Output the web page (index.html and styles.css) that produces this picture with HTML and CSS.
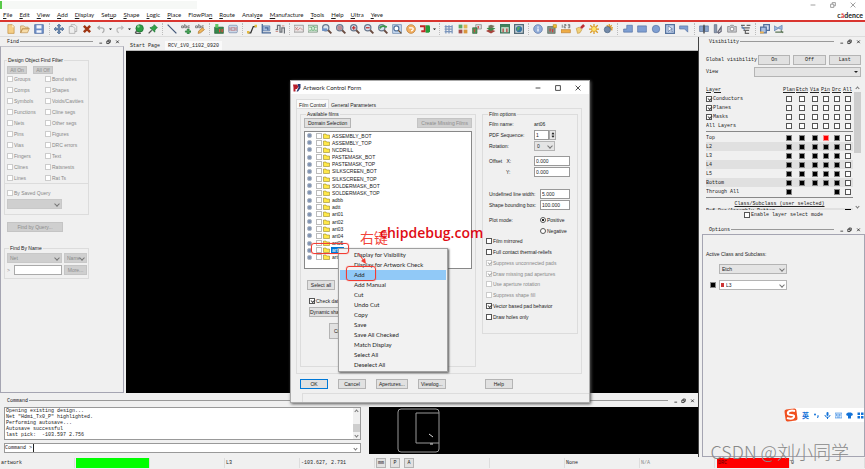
FILE: index.html
```
<!DOCTYPE html>
<html lang="en">
<head>
  <meta charset="UTF-8">
  <meta name="viewport" content="width=device-width, initial-scale=1.0">
  <title>Artwork Control Form</title>
  <link rel="stylesheet" href="styles.css">
</head>
<body>
  <header class="titlebar">
    <div class="doc-title"></div>
    <div class="window-icons">
      <svg viewBox="0 0 10 10"><path d="M2 5h6"/></svg>
      <svg viewBox="0 0 10 10"><path d="M2 4h4v4H2zM4 4V2h4v4H6"/></svg>
      <svg viewBox="0 0 10 10"><path d="M2 2l6 6M8 2L2 8"/></svg>
    </div>
  </header>
  <nav class="menubar">
    <a href="#"><u>F</u>ile</a><a href="#"><u>E</u>dit</a><a href="#"><u>V</u>iew</a><a href="#"><u>A</u>dd</a><a href="#"><u>D</u>isplay</a><a href="#">Set<u>u</u>p</a><a href="#"><u>S</u>hape</a><a href="#"><u>L</u>ogic</a><a href="#"><u>P</u>lace</a><a href="#">FlowPla<u>n</u></a><a href="#"><u>R</u>oute</a><a href="#">Analy<u>z</u>e</a><a href="#"><u>M</u>anufacture</a><a href="#"><u>T</u>ools</a><a href="#"><u>H</u>elp</a><a href="#"><u>U</u>ltra</a><a href="#"><u>Y</u>eve</a>
    <span class="brand">c<i>ā</i>dence</span>
  </nav>

  <div class="toolbar">
    <div class="group">
      <svg viewBox="0 0 16 16"><path fill="#f5cf87" stroke="#bb8638" d="M3 1h7l3 3v11H3z"/><path fill="#fff3d5" d="M10 1v4h3z"/></svg>
      <svg viewBox="0 0 16 16"><path fill="#f7dca8" stroke="#b98a47" d="M1 3h5l2 2h5v3H4l-3 6zM1 14l3-7h11l-3 7z"/></svg>
      <svg viewBox="0 0 16 16"><path fill="#6d8fc9" stroke="#3f5e98" d="M1 1h14v14H1z"/><path fill="#f3f6fb" d="M4 2h8v5H4zM4 10h8v4H4z"/></svg>
    </div>
    <div class="group">
      <svg viewBox="0 0 16 16"><path fill="#6d8eb5" stroke="#3d5f8b" d="M8 0l3 3H9v4h4V5l3 3-3 3V9H9v4h2l-3 3-3-3h2V9H3v2L0 8l3-3v2h4V3H5z"/></svg>
      <svg viewBox="0 0 16 16"><path fill="#eee" stroke="#999" d="M5 1h6l3 3v8H5z"/><path fill="#eee" stroke="#999" d="M2 4h6l3 3v8H2z"/></svg>
      <svg viewBox="0 0 16 16"><path fill="none" stroke="#9f3512" stroke-width="4" d="M3 3l10 10M13 3L3 13"/></svg>
      <svg viewBox="0 0 16 16"><path fill="none" stroke="#aaa" stroke-width="2" d="M6 3L3 6l3 3M3 6h6c5 0 5 6 1 8"/></svg>
      <svg class="arrow" viewBox="0 0 6 16"><path d="M0 7h6l-3 3z"/></svg>
      <svg viewBox="0 0 16 16"><path fill="none" stroke="#bbb" stroke-width="2" d="M10 3l3 3-3 3M13 6H7c-5 0-5 6-1 8"/></svg>
      <svg class="arrow" viewBox="0 0 6 16"><path d="M0 7h6l-3 3z"/></svg>
      <svg viewBox="0 0 16 16"><circle cx="9" cy="7" r="6" fill="#2f9e45" stroke="#136326"/><circle cx="7" cy="4" r="2" fill="#8bda97"/><path stroke="#555" stroke-width="2" d="M3 15h8M4 11l-2 4"/></svg>
      <svg viewBox="0 0 16 16"><path fill="#33a44a" stroke="#176d2b" d="M10 1l5 5-2 1-2 3v3L3 6l3-1 3-2z"/><path stroke="#555" stroke-width="2" d="M6 10l-5 5"/></svg>
    </div>
    <div class="group">
      <svg viewBox="0 0 16 16"><path stroke="#405577" stroke-width="2" d="M1 1l14 14"/></svg>
      <svg viewBox="0 0 16 16"><path fill="none" stroke="#444" d="M1 6V3h3v3H1M6 0v6h3V3H6M14 3h-3v3h3"/><path fill="#48a555" stroke="#24763a" d="M10 8h3v3h3v2h-3v3h-3v-3H7v-2h3z"/></svg>
      <svg viewBox="0 0 16 16"><path fill="none" stroke="#444" d="M1 6V3h3v3H1M6 0v6h3V3H6M14 3h-3v3h3"/><path fill="#efb75d" stroke="#a96d25" d="M5 15l1-4 6-5 3 3-6 5z"/></svg>
    </div>
    <div class="group">
      <svg viewBox="0 0 16 16"><path fill="#37874a" stroke="#225b34" d="M1 5h14v10H1z"/><path fill="#62c765" d="M2 0h5v6H2z"/><path fill="#e3463d" d="M8 8h2v5H8zM12 8h2v5h-2z"/></svg>
      <svg viewBox="0 0 16 16"><rect x="1" y="2" width="14" height="12" rx="2" fill="#ccd8e8" stroke="#6d83a5"/><path fill="none" stroke="#b65a5a" d="M5 6h6v4H5zM3 5v6M13 5v6"/></svg>
    </div>
    <div class="group">
      <svg viewBox="0 0 16 16"><path fill="none" stroke="#333" stroke-width="2" d="M2 14h4l4-10h5"/><path fill="#e4ba3d" d="M0 11h4v4H0zM12 1h4v4h-4z"/></svg>
      <svg viewBox="0 0 16 16"><path fill="#a5bce0" stroke="#456695" d="M3 3h11v8H3z"/><path fill="none" stroke="#456695" stroke-width="2" d="M2 0v14h14M6 6h5v4"/></svg>
      <svg viewBox="0 0 16 16"><path fill="none" stroke="#6b7077" stroke-width="2" d="M1 9h3V2h4v11h3V6h4v9"/><path stroke="#bb5b50" d="M1 12h4M11 3h4"/></svg>
    </div>
    <div class="group">
      <svg viewBox="0 0 16 16"><path fill="#e8e4e4" stroke="#777" d="M0 2h15v11H0z"/><path fill="none" stroke="#c36a69" d="M2 5l4 5 4-4 4 4M2 10l4-5"/></svg>
      <svg viewBox="0 0 16 16"><path fill="#e3efe4" stroke="#55735b" d="M0 2h15v11H0z"/><path fill="none" stroke="#349347" d="M2 5h4v5h4V5h4M2 10h3M7 4h3M11 10h3"/></svg>
      <svg viewBox="0 0 16 16"><use href="#lens"/><path fill="#6f94c8" d="M0 7h8v4H0z"/></svg>
      <svg viewBox="0 0 16 16"><use href="#lens"/><circle cx="6" cy="6" r="4" fill="#b98b93"/></svg>
      <svg viewBox="0 0 16 16"><use href="#lens"/><path stroke="#c02d2d" stroke-width="2" d="M3 6h6M6 3v6"/></svg>
      <svg viewBox="0 0 16 16"><use href="#lens"/><path stroke="#c02d2d" stroke-width="2" d="M3 6h6"/></svg>
      <svg viewBox="0 0 16 16"><use href="#lens"/><path fill="none" stroke="#3a9948" stroke-width="3" d="M3 7c2-5 7-4 11-2"/></svg>
      <svg viewBox="0 0 16 16"><path fill="#cbdcf2" stroke="#54749e" d="M1 1h14v14H1z"/><circle cx="7" cy="7" r="4" fill="#fff" stroke="#54749e" stroke-width="2"/><path stroke="#705030" stroke-width="2" d="M10 10l5 5"/></svg>
      <svg viewBox="0 0 16 16"><circle cx="8" cy="8" r="7" fill="#f1af61" stroke="#b97227"/><path fill="none" stroke="#fff" stroke-width="2" d="M5 6h5c3 1 1 5-2 5"/></svg>
      <svg viewBox="0 0 16 16"><path fill="#c32626" d="M0 2h9v11H2v-3h4V5H0z"/><path fill="#269a39" d="M9 2h6l1 2v8l-2 2H9z"/></svg>
      <svg class="arrow" viewBox="0 0 6 16"><path d="M0 7h6l-3 3z"/></svg>
    </div>
    <div class="group">
      <svg viewBox="0 0 16 16"><path fill="none" stroke="#7c96bc" stroke-width="2" d="M1 4h13M1 8h13M1 12h13M3 2v13M8 2v13M13 2v13"/></svg>
      <svg viewBox="0 0 16 16"><path fill="#5da864" d="M1 1h6v6H1z"/><path fill="#e1b755" d="M9 1h6v6H9z"/><path fill="#a74d48" d="M1 9h6v6H1z"/><path fill="#d9963d" d="M9 9h6v6H9z"/></svg>
      <svg viewBox="0 0 16 16"><path fill="#ddd" stroke="#777" d="M6 1h9v7H6z"/><path fill="#4f9a57" stroke="#335c3b" d="M1 6h7v9H1z"/><path stroke="#c44" stroke-width="2" d="M4 8v5M10 3v4"/></svg>
      <svg viewBox="0 0 16 16"><path fill="#a6443c" d="M0 11l6-3 9 3-7 4z"/><path fill="#3f874b" d="M1 7l6-3 8 3-7 4z"/><path fill="#79715b" d="M3 3l5-2 6 2-6 4z"/></svg>
      <svg viewBox="0 0 16 16"><path fill="#c4e1cc" stroke="#38755b" stroke-width="2" d="M1 1h14v13H1z"/><path fill="#43825b" d="M1 1h14v4H1z"/><path stroke="#b53b3b" stroke-width="2" d="M5 7v6M11 7v6"/></svg>
      <svg viewBox="0 0 16 16"><path fill="#ccd4da" stroke="#566c78" stroke-width="2" d="M1 1h14v14H1z"/><circle cx="8" cy="8" r="5" fill="#3a75a4"/><path fill="#57a760" d="M5 5l5-1-2 5-3 2z"/></svg>
    </div>
    <div class="group">
      <svg viewBox="0 0 16 16"><circle cx="8" cy="8" r="7" fill="#91acd8" stroke="#5571a2"/><path stroke="#fff" stroke-width="2" d="M8 4v2M8 7v5"/></svg>
      <svg viewBox="0 0 16 16"><path fill="#819387" stroke="#4e6254" d="M1 4h12v11H1z"/><path stroke="#d23d3d" stroke-width="2" d="M5 7v5M9 8v5"/><path fill="#f1c136" stroke="#b68119" d="M10 1h5v5h-5z"/></svg>
      <svg viewBox="0 0 16 16"><path fill="none" stroke="#444" d="M2 1v5M5 1h3v2H5v3h3M11 1h3v5h-3M11 3h3"/><path fill="#efad46" stroke="#b9792d" d="M0 9h15v5H0z"/></svg>
      <svg viewBox="0 0 16 16"><path fill="#bd3034" d="M8 5l5-5 3 3-5 5z"/><path fill="#f0d079" stroke="#c2933e" d="M2 7l5-2 4 4-3 5-4 1z"/></svg>
      <svg viewBox="0 0 16 16"><path stroke="#d99826" stroke-width="2" d="M8 0v16M0 8h16M2 2l12 12M14 2L2 14"/><circle cx="8" cy="8" r="4" fill="#ffe467" stroke="#d99826"/></svg>
      <svg viewBox="0 0 16 16"><path stroke="#d99826" stroke-width="2" d="M10 0v12M4 6h12M6 2l9 8M14 2L6 10"/><circle cx="7" cy="9" r="5" fill="#738aa9" stroke="#47607d"/></svg>
    </div>
    <div class="group wide">
      <svg viewBox="0 0 16 16"><path class="shape" d="M6 2h9v11H1V8h5z"/></svg>
      <svg viewBox="0 0 16 16"><path class="shape" d="M1 3h14v10H1z"/></svg>
      <svg viewBox="0 0 16 16"><circle class="shape" cx="8" cy="8" r="6"/></svg>
      <svg viewBox="0 0 16 16"><path fill="#c5d5ee" stroke="#56739e" stroke-width="2" d="M1 1h14v14H1z"/><path fill="#fff" stroke="#405f90" d="M5 3v9l3-2 3 3 1-1-3-4h3z"/></svg>
      <svg viewBox="0 0 16 16"><path class="shape" d="M1 3h13v10L9 8H1z"/></svg>
    </div>
    <div class="group">
      <svg viewBox="0 0 16 16"><path fill="#8aa5cb" stroke="#4c6590" d="M1 3h6v9H1zM9 3h6v9H9z"/><path stroke="#333" stroke-width="2" d="M8 1v14"/></svg>
      <svg viewBox="0 0 16 16"><path fill="#8796ad" stroke="#57647a" d="M2 1h4v13H2z"/><path fill="none" stroke="#667" stroke-width="2" d="M7 14l6-9v7l-5 3"/></svg>
      <svg viewBox="0 0 16 16"><path fill="#c9cbd0" stroke="#777" d="M1 4h3l2-2h4l2 2h3v9H1z"/><circle cx="8" cy="8" r="3" fill="#fff" stroke="#666"/></svg>
      <svg viewBox="0 0 16 16"><path fill="none" stroke="#666" stroke-width="2" d="M0 2h6M9 2h6M1 6h13M4 10h9M7 10v5h6"/><path stroke="#5681b8" stroke-width="2" d="M1 4l5 5"/></svg>
    </div>
    <div class="group">
      <svg viewBox="0 0 16 16"><path fill="#d3def0" stroke="#516f9e" stroke-width="2" d="M6 1h9v9H6z"/><path fill="#a8bfe2" stroke="#516f9e" stroke-width="2" d="M1 5h9v9H1z"/><path fill="#efb454" d="M0 12h6v3H0z"/></svg>
      <svg viewBox="0 0 16 16"><path fill="#9cb7de" stroke="#5778a7" d="M0 3l6 3 7-4v7l-6-2-7 4z"/><path stroke="#5b7456" stroke-width="2" d="M2 13h13M11 10l3 4"/></svg>
    </div>
    <svg class="defs"><defs><g id="lens"><circle cx="6" cy="6" r="5" fill="#d8e3ef" stroke="#69788e" stroke-width="2"/><path stroke="#694b40" stroke-width="3" d="M10 10l5 5"/></g>
      <g id="dock" fill="none" stroke="#222" stroke-width="2"><path d="M1 10h7"/><path d="M20 5h6v6h-6zM23 5V2h6v6h-3"/><path d="M44 3l7 7M51 3l-7 7"/></g></defs></svg>
  </div>

  <main class="workspace">
    <section class="left">
      <div class="upper">
        <aside class="find">
          <div class="dock-title"><span>Find</span><hr><svg class="dock-icons" viewBox="0 0 54 14"><use href="#dock"/></svg></div>
          <div class="find-body">
            <fieldset class="filter">
              <legend>Design Object Find Filter</legend>
              <div class="row"><button disabled>All On</button><button disabled>All Off</button></div>
              <div class="checks">
                <label><input type="checkbox" disabled>Groups</label><label><input type="checkbox" disabled>Bond wires</label>
                <label><input type="checkbox" disabled>Comps</label><label><input type="checkbox" disabled>Shapes</label>
                <label><input type="checkbox" disabled>Symbols</label><label><input type="checkbox" disabled>Voids/Cavities</label>
                <label><input type="checkbox" disabled>Functions</label><label><input type="checkbox" disabled>Cline segs</label>
                <label><input type="checkbox" disabled>Nets</label><label><input type="checkbox" disabled>Other segs</label>
                <label><input type="checkbox" disabled>Pins</label><label><input type="checkbox" disabled>Figures</label>
                <label><input type="checkbox" disabled>Vias</label><label><input type="checkbox" disabled>DRC errors</label>
                <label><input type="checkbox" disabled>Fingers</label><label><input type="checkbox" disabled>Text</label>
                <label><input type="checkbox" disabled>Clines</label><label><input type="checkbox" disabled>Ratsnests</label>
                <label><input type="checkbox" disabled>Lines</label><label><input type="checkbox" disabled>Rat Ts</label>
              </div>
              <div class="saved">
                <label><input type="checkbox" disabled>By Saved Query</label>
                <span class="select"><select disabled aria-label="Saved query"><option></option></select></span>
              </div>
            </fieldset>
            <button class="query" disabled>Find by Query...</button>
            <fieldset class="by-name">
              <legend>Find By Name</legend>
              <span class="select"><select disabled aria-label="Object type"><option>Net</option></select></span>
              <span class="select"><select disabled aria-label="Match by"><option>Name</option></select></span>
              <label class="prompt">&gt;<input type="text" disabled></label>
              <button disabled>More...</button>
            </fieldset>
          </div>
        </aside>
        <div class="design">
          <div class="tabs"><span>Start Page</span><span class="active">RCV_1V0_1102_0920</span></div>
          <div class="canvas"></div>
        </div>
      </div>

      <div class="lower">
        <div class="dock-title"><span>Command</span><hr><svg class="dock-icons" viewBox="0 0 54 14"><use href="#dock"/></svg></div>
        <div class="console">
          <div class="command">
            <div class="log">
              <div class="log-text">Opening existing design...<br>Net "Hdmi_Tx0_P" highlighted.<br>Performing autosave...<br>Autosave successful<br>last pick:&nbsp; -103.597 2.756</div>
              <div class="scroll"><i class="up"></i><b></b><i></i></div>
            </div>
            <div class="command-line"><label for="cmd">Command &gt;</label><input type="text" id="cmd"><i class="chevron"></i></div>
          </div>
          <div class="world">
            <svg viewBox="0 0 330 47"><path fill="none" stroke="#999" d="M32 2h35q3 0 3 3v37q0 3-3 3H32q-3 0-3-3V5q0-3 3-3zM47 6h23M47 6v30h23"/><path stroke="#ddd" d="M60 27l4 3M61 37h3"/></svg>
          </div>
        </div>
      </div>
    </section>

    <aside class="right">
      <div class="dock-title"><span>Visibility</span><hr><svg class="dock-icons" viewBox="0 0 54 14"><use href="#dock"/></svg></div>
      <div class="visibility">
        <div class="global"><span>Global visibility</span><button>On</button><button>Off</button><button>Last</button></div>
        <div class="view"><label for="view">View</label><span class="select filled"><select id="view"><option></option></select></span></div>
        <div class="layers">
          <div class="layers-list">
            <table id="layer-groups">
              <tr><th>Layer</th><th>Plan</th><th>Etch</th><th>Via</th><th>Pin</th><th>Drc</th><th>All</th></tr>
            </table>
            <hr>
            <table id="layer-rows"></table>
            <hr>
            <p class="subclass">Class/Subclass (user selected)</p>
            <div class="cut"><span>Ref Des/Assembly Bottom</span><i></i></div>
          </div>
          <div class="scroll"><i class="up"></i><b></b><i></i></div>
        </div>
        <label class="enable"><input type="checkbox">Enable layer select mode</label>
      </div>
      <div class="dock-title options-title"><span>Options</span><hr><svg class="dock-icons" viewBox="0 0 54 14"><use href="#dock"/></svg></div>
      <div class="options">
        <p>Active Class and Subclass:</p>
        <div class="row"><i></i><span class="select"><select aria-label="Class"><option>Etch</option></select></span></div>
        <div class="row"><i class="swatch"></i><span class="select white"><b></b><select aria-label="Subclass"><option>L3</option></select></span></div>
      </div>
    </aside>
  </main>

  <footer class="status">
    <span>artwork</span><span class="ready"></span><span></span><span>L3</span><span>-103.627, 2.731</span>
    <span class="modes"><button>mm</button><button>P</button><button>A</button></span>
    <span></span><span>None</span><span class="dim">N/A</span><span class="drc">DRC</span><span>0</span>
  </footer>

  <div class="dialog" role="dialog" aria-label="Artwork Control Form">
    <div class="dialog-title">
      <svg viewBox="0 0 16 16"><path fill="#b71f2b" d="M0 1h8l3 4-3 5H5v5H1V7z"/><path fill="#26366f" d="M9 0h6v8l-5 7H7l4-8z"/></svg>
      <span>Artwork Control Form</span>
      <div class="window-icons">
        <svg viewBox="0 0 10 10"><path d="M2 5h6"/></svg>
        <svg viewBox="0 0 10 10"><path d="M2 2h6v6H2z"/></svg>
        <svg viewBox="0 0 10 10"><path d="M2 2l6 6M8 2L2 8"/></svg>
      </div>
    </div>
    <div class="dialog-tabs"><span class="active">Film Control</span><span>General Parameters</span></div>
    <div class="pane">
      <fieldset class="films">
        <legend>Available films</legend>
        <div class="row"><button>Domain Selection</button><button disabled>Create Missing Films</button></div>
        <ul class="tree" id="films"></ul>
        <button class="select-all">Select all</button>
        <label><input type="checkbox" checked>Check database before artwork</label>
        <button class="dynamic">Dynamic shapes need updating...</button>
        <button class="create">Create Artwork</button>
      </fieldset>
      <fieldset class="film-options">
        <legend>Film options</legend>
        <div class="field"><span>Film name:</span><span>art06</span></div>
        <div class="field"><label for="seq">PDF Sequence:</label><span class="spinner"><input type="text" id="seq" value="1"><span><i class="chevron up"></i><i class="chevron"></i></span></span></div>
        <div class="field"><label for="rot">Rotation:</label><span class="select small"><select id="rot"><option>0</option></select></span></div>
        <div class="field gap"><label for="ox">Offset&nbsp; &nbsp;X:</label><input type="text" id="ox" value="0.000"></div>
        <div class="field"><label for="oy" class="indent">Y:</label><input type="text" id="oy" value="0.000"></div>
        <div class="field far long"><label for="lw">Undefined line width:</label><input type="text" id="lw" value="5.000"></div>
        <div class="field long"><label for="bb">Shape bounding box:</label><input type="text" id="bb" value="100.000"></div>
        <div class="field gap long"><span>Plot mode:</span><label><input type="radio" name="plot" checked>Positive</label></div>
        <div class="field long"><span></span><label><input type="radio" name="plot">Negative</label></div>
        <div class="flags">
          <label><input type="checkbox">Film mirrored</label>
          <label><input type="checkbox">Full contact thermal-reliefs</label>
          <label class="off"><input type="checkbox" checked disabled>Suppress unconnected pads</label>
          <label class="off"><input type="checkbox" checked disabled>Draw missing pad apertures</label>
          <label class="off"><input type="checkbox" disabled>Use aperture rotation</label>
          <label class="off"><input type="checkbox" disabled>Suppress shape fill</label>
          <label><input type="checkbox" checked>Vector based pad behavior</label>
          <label><input type="checkbox">Draw holes only</label>
        </div>
      </fieldset>
    </div>
    <div class="dialog-buttons"><button class="default">OK</button><button>Cancel</button><button>Apertures...</button><button>Viewlog...</button><button class="help">Help</button></div>
    <div class="dialog-status"></div>
  </div>

  <ul class="context-menu">
    <li>Display for Visibility</li>
    <li>Display for Artwork Check</li>
    <li class="hover">Add</li>
    <li>Add Manual</li>
    <li>Cut</li>
    <li>Undo Cut</li>
    <li>Copy</li>
    <li>Save</li>
    <li>Save All Checked</li>
    <li>Match Display</li>
    <li>Select All</li>
    <li>Deselect All</li>
  </ul>

  <div class="mark mark-film"></div>
  <div class="mark mark-add"></div>
  <svg class="mark-arrow" viewBox="0 0 12 14"><path fill="none" stroke="#f23c32" stroke-width="1" d="M2 2l6 8"/><path fill="#f23c32" d="M10 13L5 10l4-3z"/></svg>
  <div class="note" lang="zh">右键</div>
  <div class="site">chipdebug.com</div>

  <div class="ime" lang="zh">
    <svg class="ime-logo" viewBox="0 0 14 14"><rect x="1" y="1" width="12" height="12" rx="2" fill="#f05020" transform="rotate(-8 7 7)"/><path fill="none" stroke="#fff" stroke-width="2" d="M11 3C7 2 3 3 4 6c1 2 7 0 6 3-1 2-4 2-7 1"/></svg>
    <span>英</span>
    <svg viewBox="0 0 14 14"><circle cx="4" cy="5" r="2"/><path d="M8 7h4l-2 5H8l1-3z"/></svg>
    <svg viewBox="0 0 14 14"><rect x="5" y="0" width="4" height="8" rx="2"/><path fill="none" stroke="#1272d8" stroke-width="2" d="M2 6c0 6 10 6 10 0M7 10v4"/></svg>
    <svg viewBox="0 0 14 14"><path fill="#d6e8fb" stroke="#1272d8" d="M0 2h14v10H0z"/><path stroke="#1272d8" stroke-dasharray="2 1" d="M2 5h10M2 7h10"/><path stroke="#1272d8" d="M4 10h6"/></svg>
    <svg viewBox="0 0 14 14"><path d="M4 1h6l4 3-2 4-2-1v6H4V7L2 8 0 4z"/></svg>
    <svg viewBox="0 0 14 14"><path d="M1 1h5v5H1zM8 1h5v5H8zM1 8h5v5H1zM8 8h5v5H8z"/></svg>
  </div>
  <div class="watermark" lang="zh">CSDN @刘小同学</div>

  <script src="script.js"></script>
</body>
</html>
```
FILE: styles.css
```
* {
  box-sizing: border-box;
}

body {
  margin: 0;
  height: 100vh;
  display: flex;
  flex-direction: column;
  position: relative;
  overflow: hidden;
  background: #f0f0f0;
  color: #222;
  font-family: "Liberation Sans", sans-serif;
  font-size: 5px;
  line-height: 6px;
}

p, ul, fieldset, hr {
  margin: 0;
  padding: 0;
}

i {
  font-style: normal;
}

/* Form controls */
button, input, select {
  font: inherit;
  color: inherit;
  margin: 0;
  padding: 0;
}

button {
  height: 10px;
  background: #e1e1e1;
  border: 1px solid #b4b4b4;
  white-space: nowrap;
}

button:disabled {
  background: #cfcfcf;
  border-color: #c4c4c4;
  color: #8c8c8c;
}

input[type="text"] {
  height: 10px;
  min-width: 0;
  background: #fff;
  border: 1px solid #999;
  border-radius: 0;
}

input[type="text"]:disabled {
  border-color: #aaa;
}

input[type="checkbox"], input[type="radio"] {
  appearance: none;
  flex: none;
  width: 6px;
  height: 6px;
  background: #fff;
  border: 1px solid #555;
  position: relative;
}

input[type="radio"] {
  border-radius: 50%;
}

input[type="radio"]:checked {
  background: radial-gradient(#222 45%, #fff 50%);
}

input[type="checkbox"]:disabled {
  border-color: #ccc;
}

input[type="checkbox"]:checked::after {
  content: "";
  position: absolute;
  left: 1px;
  top: 0;
  width: 3px;
  height: 2px;
  border-left: 1px solid #444;
  border-bottom: 1px solid #444;
  transform: rotate(-45deg);
}

input[type="checkbox"]:checked:disabled::after {
  border-color: #aaa;
}

label {
  display: flex;
  align-items: center;
  gap: 1px;
  white-space: nowrap;
}

fieldset {
  border: 1px solid #dcdcdc;
  min-width: 0;
}

legend {
  margin-left: 2px;
  padding: 0 1px;
  height: 6px;
}

.select {
  position: relative;
  display: flex;
  height: 10px;
}

.select select {
  appearance: none;
  width: 100%;
  padding-left: 2px;
  background: #e4e4e4;
  border: 1px solid #b4b4b4;
  border-radius: 0;
}

.select select:disabled {
  background: #cfcfcf;
  border-color: #c8c8c8;
  color: #888;
  opacity: 1;
}

.select::after, .chevron, .scroll i {
  content: "";
  flex: none;
  width: 3px;
  height: 3px;
  border-right: 1px solid #777;
  border-bottom: 1px solid #777;
  transform: rotate(45deg);
}

.select::after {
  position: absolute;
  right: 3px;
  top: 3px;
}

.select.filled::after {
  width: 0;
  height: 0;
  top: 4px;
  border: 2px solid transparent;
  border-top-color: #222;
  border-bottom: 0;
  transform: none;
}

.chevron.up, .scroll i.up {
  transform: rotate(225deg);
}

.scroll {
  flex: none;
  width: 7px;
  padding: 2px 0;
  display: flex;
  flex-direction: column;
  align-items: center;
  background: #f0f0f0;
}

.scroll b {
  width: 7px;
  background: #cdcdcd;
}

/* Window header */
.titlebar {
  height: 10px;
  display: flex;
  justify-content: space-between;
  align-items: center;
  padding-right: 8px;
  background: #fff;
}

.doc-title {
  width: 23%;
  height: 8px;
  background: #f6f8f6;
  border-left: 2px solid #58c948;
}

.window-icons {
  display: flex;
  gap: 12px;
}

.window-icons svg {
  width: 8px;
  height: 8px;
  fill: none;
  stroke: #888;
}

.menubar {
  height: 10px;
  padding: 0 0 0 3px;
  display: flex;
  align-items: center;
  gap: 7px;
  background: #fff;
  font-family: Lato, sans-serif;
  font-size: 6px;
}

.menubar a {
  color: #222;
  text-decoration: none;
}

.brand {
  margin-left: auto;
  padding-right: 2px;
  font-size: 7px;
  font-weight: bold;
}

.brand i {
  color: #d33;
}

.toolbar {
  flex: none;
  height: 17px;
  padding-left: 2px;
  display: flex;
  align-items: center;
  border-top: 2px solid #d9352f;
  border-bottom: 1px solid #dcdcdc;
}

.group {
  display: flex;
  gap: 4px;
  padding: 1px 4px;
  border-left: 1px dotted #bbb;
}

.group:first-child {
  border-left: 0;
  padding-right: 5px;
}

.group.wide {
  padding: 1px 5px;
}

.group svg {
  width: 10px;
  height: 10px;
}

.group svg.arrow {
  width: 3px;
  margin: 0 -1px;
}

.shape {
  fill: #7f9fd2;
  stroke: #506d9e;
}

.defs {
  width: 0;
  height: 0;
}

/* Dock panels */
.workspace {
  flex: 1;
  min-height: 0;
  display: flex;
}

.left {
  flex: 1;
  min-width: 0;
  display: flex;
  flex-direction: column;
}

.upper {
  flex: 1;
  min-height: 0;
  display: flex;
  gap: 2px;
}

.dock-title, .tabs, .log, .command-line, .visibility, .status {
  font-family: "Liberation Mono", monospace;
  font-size: 5px;
}

.dock-title {
  flex: none;
  height: 9px;
  padding: 0 4px 0 7px;
  display: flex;
  align-items: center;
  gap: 1px;
}

.dock-title hr {
  flex: 1;
  border: 0;
  border-top: 1px solid #999;
}

.dock-icons {
  width: 21px;
  height: 6px;
  margin-left: 5px;
}

.find {
  flex: none;
  width: 124px;
  display: flex;
  flex-direction: column;
}

.find-body {
  flex: 1;
  padding: 10px 34px 0 3px;
  border: 1px solid #a5a5b2;
  border-top-color: #c5c5cc;
}

.find-body label {
  color: #888;
}

.filter {
  padding: 3px 0 5px;
}

.filter .row {
  display: flex;
  gap: 6px;
  padding-left: 2px;
}

.filter .row button {
  width: 20px;
  height: 8px;
  line-height: 5px;
}

.checks {
  height: 109px;
  padding-left: 2px;
  display: grid;
  grid-template-columns: 38px 1fr;
  grid-auto-rows: 1fr;
}

.saved {
  padding: 6px 26px 0 2px;
  border-top: 1px solid #dcdcdc;
}

.saved .select {
  margin-top: 3px;
}

.query {
  width: 56px;
  margin: 7px 0 13px 3px;
}

.by-name {
  padding: 2px 1px 3px 2px;
  display: grid;
  grid-template-columns: 55px 1fr;
  gap: 2px;
}

.prompt {
  gap: 4px;
}

.prompt input {
  width: 48px;
}

.design {
  flex: 1;
  display: flex;
  flex-direction: column;
}

.tabs {
  height: 14px;
  padding: 4px 0 0 4px;
  display: flex;
  gap: 3px;
  border-bottom: 1px solid #bbb;
}

.tabs span {
  padding: 2px 2px 0 0;
}

.tabs .active {
  padding: 2px 3px 0;
  background: #fafafa;
}

.canvas {
  flex: 1;
  background: #000;
}

/* Command window and world view */
.lower {
  flex: none;
  padding-top: 3px;
}

.lower .dock-title {
  padding-right: 3px;
}

.console {
  display: flex;
  gap: 8px;
  padding: 2px 0 3px 4px;
}

.command {
  flex: none;
  width: 357px;
  display: flex;
  flex-direction: column;
  gap: 3px;
}

.log {
  height: 33px;
  display: flex;
  background: #fff;
  border: 1px solid #999;
}

.log-text {
  flex: 1;
  padding-left: 1px;
}

.log .scroll b {
  height: 9px;
  margin: 11px 0 2px;
}

.command-line {
  height: 10px;
  display: flex;
  align-items: center;
  padding-right: 3px;
  background: #fff;
  border: 1px solid #999;
}

.command-line input {
  flex: 1;
  height: 8px;
  margin-left: 1px;
  border-width: 0 0 0 1px;
  border-color: #222;
}

.world {
  flex: 1;
  height: 47px;
  background: #000;
}

.world svg {
  height: 47px;
}

/* Right dock */
.right {
  flex: none;
  width: 167px;
  display: flex;
  flex-direction: column;
  border-left: 1px solid #444;
}

.right .dock-title {
  padding-left: 10px;
}

.visibility {
  padding: 9px 4px 0 7px;
}

.global {
  display: grid;
  grid-template-columns: 49px 1fr 1fr 1fr;
  column-gap: 3px;
  align-items: center;
  white-space: nowrap;
}

.view {
  display: flex;
  align-items: center;
  margin-top: 2px;
}

.view label {
  width: 48px;
}

.view .select {
  flex: 1;
}

.layers {
  display: flex;
  gap: 1px;
  margin-top: 8px;
}

.layers-list {
  flex: 1;
  height: 125px;
  overflow: hidden;
}

.layers table {
  width: 100%;
  border-collapse: collapse;
  table-layout: fixed;
}

.layers tr {
  height: 9px;
}

.layers td, .layers th {
  width: 11px;
  padding: 0;
  font-weight: normal;
  text-align: center;
}

.layers th {
  text-decoration: underline;
}

.layers td:first-child, .layers th:first-child {
  width: auto;
  text-align: left;
}

.layers td:nth-child(2), .layers th:nth-child(2) {
  width: 12px;
}

.layers td:nth-child(3), .layers th:nth-child(3) {
  width: 14px;
}

.layers td input {
  display: block;
  margin: 0 auto;
}

.layers label input[type="checkbox"] {
  margin: 0;
}

.layers td input.lit {
  background: #000;
  border-color: #888;
}

.layers td input.red {
  background: #f00;
  border-color: #f88;
}

#layer-rows tr:nth-child(even) {
  background: #e0e0e0;
}

.layers hr {
  border: 0;
  border-top: 1px solid #888;
  margin: 1px 0;
}

.subclass {
  padding-top: 2px;
  text-align: center;
  text-decoration: underline;
}

.cut {
  display: flex;
  justify-content: space-between;
  margin-top: 1px;
  padding-right: 2px;
  background: #e0e0e0;
}

.cut i {
  width: 6px;
  height: 4px;
  margin-top: 1px;
  background: #000;
}

.layers .scroll b {
  height: 61px;
  margin: 2px 0 auto;
}

.enable {
  justify-content: center;
  margin-top: 2px;
}

.options-title {
  margin-top: 7px;
}

.options {
  flex: 1;
  margin-left: 3px;
  padding: 16px 0 0 3px;
  border: 1px solid #a5a5b2;
}

.options .row {
  display: flex;
  align-items: center;
  gap: 3px;
  margin: 6px 0 0 4px;
}

.options p + .row {
  margin-top: 7px;
}

.options .row > i {
  width: 6px;
  height: 6px;
}

.options .swatch {
  background: #000;
  border: 1px solid #888;
}

.options .select {
  width: 68px;
}

.options .select b {
  position: absolute;
  left: 2px;
  top: 3px;
  width: 3px;
  height: 4px;
  background: #c33;
}

.white select {
  background: #fff;
}

.options .white select {
  padding-left: 6px;
}

/* Status bar */
.status {
  flex: none;
  height: 12px;
  display: grid;
  grid-template-columns: repeat(5, 15fr) 23fr repeat(5, 15fr);
  align-items: center;
}

.status > span {
  height: 10px;
  padding-left: 1px;
  line-height: 10px;
  border-right: 1px solid #ddd;
}

.status .ready {
  margin-left: 1px;
  background: #0f0;
}

.status .drc {
  margin-left: 2px;
  background: #f00;
  color: #600;
}

.status .dim {
  color: #888;
}

.modes {
  display: flex;
  gap: 4px;
}

.modes button {
  width: 10px;
  line-height: 5px;
}

/* Artwork dialog */
.dialog {
  position: absolute;
  left: 290px;
  top: 80px;
  width: 300px;
  display: flex;
  flex-direction: column;
  background: #f0f0f0;
  border: 1px solid #aaa;
  box-shadow: 1px 1px 3px #555;
}

.dialog-title {
  height: 13px;
  padding: 0 7px 0 2px;
  display: flex;
  align-items: center;
  gap: 2px;
  background: #fff;
  font-family: Lato, sans-serif;
  font-size: 6px;
}

.dialog-title > svg {
  width: 8px;
  height: 8px;
}

.dialog-title .window-icons {
  margin-left: auto;
}

.dialog-title .window-icons svg {
  stroke: #222;
}

.dialog-tabs {
  display: flex;
  margin: 5px 0 0 5px;
}

.dialog-tabs span {
  padding: 3px 2px 0;
  height: 9px;
}

.dialog-tabs .active {
  padding-top: 2px;
  background: #fafafa;
  border: 1px solid #ddd;
  border-bottom: 0;
}

.pane {
  display: flex;
  gap: 6px;
  margin: 0 7px 0 5px;
  padding: 2px 3px 6px;
  border: 1px solid #ddd;
}

.films {
  flex: 1;
  padding: 1px 3px 27px;
}

.films .row {
  display: flex;
  justify-content: space-between;
}

.films .row button {
  padding: 0 3px;
}

.tree {
  height: 138px;
  margin-top: 3px;
  padding: 0 0 7px 2px;
  display: grid;
  grid-auto-rows: 1fr;
  background: #fff;
  border: 1px solid #888;
  list-style: none;
}

.tree li, .tree label {
  display: flex;
  align-items: center;
}

.tree .expand {
  width: 5px;
  height: 5px;
  margin-right: 4px;
  border: 1px solid #b4bcc8;
  border-radius: 2px;
  background: #7f93b3;
}

.tree input[type="checkbox"] {
  border-color: #bbb;
}

.tree svg {
  width: 7px;
  height: 6px;
}

.tree .name {
  padding: 0 1px;
}

.tree .selected {
  background: #0078d7;
  color: #fff;
}

.films .select-all {
  display: block;
  width: 28px;
  margin: 11px 0 8px 3px;
}

.films > label {
  margin-left: 5px;
}

.films .dynamic {
  display: block;
  margin: 3px 0 6px 5px;
}

.films .create {
  display: block;
  height: 16px;
  margin-left: 25px;
  padding: 0 4px;
}

.film-options {
  align-self: flex-start;
  width: 96px;
  padding: 1px 3px 11px;
}

.field {
  height: 11px;
  display: grid;
  grid-template-columns: 45px 36px;
  align-items: center;
  padding-left: 3px;
  white-space: nowrap;
}

.field.long {
  grid-template-columns: 51px 30px;
}

.field.gap {
  margin-top: 4px;
}

.field.far {
  margin-top: 11px;
}

.field input[type="text"] {
  width: 100%;
  padding-left: 1px;
}

.indent {
  padding-left: 17px;
}

.spinner {
  width: 22px;
  display: flex;
}

.spinner > span {
  flex: none;
  width: 7px;
  display: flex;
  flex-direction: column;
  align-items: center;
  justify-content: space-between;
  padding: 2px 0;
  background: #e8e8e8;
  border: 1px solid #aaa;
}

.spinner .chevron {
  width: 2px;
  height: 2px;
  border-color: #222;
}

.select.small {
  width: 21px;
}

.flags {
  height: 86px;
  display: grid;
  grid-auto-rows: 1fr;
}

.flags .off {
  color: #888;
}

.dialog-buttons {
  display: flex;
  gap: 10px;
  padding: 5px 9px 4px;
}

.dialog-buttons button {
  min-width: 28px;
  padding: 0 2px;
}

.dialog-buttons .default {
  border: 1px solid #0078d7;
}

.dialog-buttons .help {
  margin-left: 29px;
}

.dialog-status {
  height: 9px;
  margin-left: 11px;
  border-left: 1px solid #ddd;
  border-top: 1px solid #ddd;
}

.context-menu {
  position: absolute;
  left: 338px;
  top: 248px;
  width: 110px;
  padding: 1px;
  background: #f2f2f2;
  border: 1px solid #a0a0a0;
  box-shadow: 1px 1px 2px #555;
  list-style: none;
  font-family: Lato, sans-serif;
  font-size: 6px;
}

.context-menu li {
  height: 10px;
  padding-left: 14px;
  line-height: 9px;
}

.context-menu .hover {
  background: #91c9f7;
}

/* Red annotations */
.mark {
  position: absolute;
  border: 1px solid #f23c32;
  border-radius: 3px;
  box-shadow: 0 0 1px #f23c32;
}

.mark-film {
  left: 311px;
  top: 243px;
  width: 38px;
  height: 11px;
}

.mark-add {
  left: 346px;
  top: 266px;
  width: 30px;
  height: 15px;
}

.mark-arrow {
  position: absolute;
  left: 356px;
  top: 251px;
  width: 12px;
}

.note {
  position: absolute;
  left: 360px;
  top: 229px;
  color: #f2453c;
  font: 14px/16px "Noto Sans CJK SC", sans-serif;
}

.site {
  position: absolute;
  left: 380px;
  top: 224px;
  color: #e00b14;
  font: 600 14px/18px "Open Sans", sans-serif;
}

.ime {
  position: absolute;
  right: 1px;
  top: 408px;
  height: 14px;
  display: flex;
  align-items: center;
  gap: 4px;
  background: linear-gradient(90deg, transparent 8px, #fff 8px);
  color: #1272d8;
  font: bold 7px/8px "Noto Sans CJK SC", sans-serif;
}

.ime svg {
  width: 7px;
  height: 7px;
  fill: #1272d8;
}

.ime .ime-logo {
  width: 14px;
  height: 14px;
}

.watermark {
  position: absolute;
  right: 16px;
  bottom: 6px;
  color: #888;
  font: 300 18px/24px "Noto Sans CJK SC", sans-serif;
}
```
FILE: script.js
```
const films = ['ASSEMBLY_BOT', 'ASSEMBLY_TOP', 'NCDRILL', 'PASTEMASK_BOT', 'PASTEMASK_TOP',
  'SILKSCREEN_BOT', 'SILKSCREEN_TOP', 'SOLDERMASK_BOT', 'SOLDERMASK_TOP', 'adbb', 'adtt',
  'art01', 'art02', 'art03', 'art04', 'art05', 'art06', 'art07'];
const columns = ['Plan', 'Etch', 'Via', 'Pin', 'Drc', 'All'];

document.getElementById('films').innerHTML = films.map(name => `
  <li><i class="expand"></i><label><input type="checkbox">
    <svg viewBox="0 0 14 12"><path fill="#ffe84a" stroke="#857514" d="M1 2h5l1 2h6v7H1z"/></svg>
    <span class="name${name === 'art06' ? ' selected' : ''}">${name}</span></label></li>`).join('');

function cell(layer, column, cls) {
  return `<td><input type="checkbox" class="${cls}" aria-label="${layer} ${column}"></td>`;
}

['Conductors', 'Planes', 'Masks', 'All Layers'].forEach(name => {
  const head = name === 'All Layers' ? name : `<label><input type="checkbox" checked>${name}</label>`;
  document.querySelector('#layer-groups tbody').insertAdjacentHTML('beforeend',
    `<tr><td>${head}</td>${columns.map(c => cell(name, c, '')).join('')}</tr>`);
});

// Through All only has Plan, Drc and All
document.getElementById('layer-rows').innerHTML = ['Top', 'L2', 'L3', 'L4', 'L5', 'Bottom', 'Through All'].map(name => {
  const cells = columns.map(c => {
    if (name === 'Through All' && ['Etch', 'Via', 'Pin'].includes(c)) return '<td></td>';
    if (c === 'All') return cell(name, c, '');
    return cell(name, c, name === 'Top' && c === 'Pin' ? 'red' : 'lit');
  });
  return `<tr><td>${name}</td>${cells.join('')}</tr>`;
}).join('');
```
